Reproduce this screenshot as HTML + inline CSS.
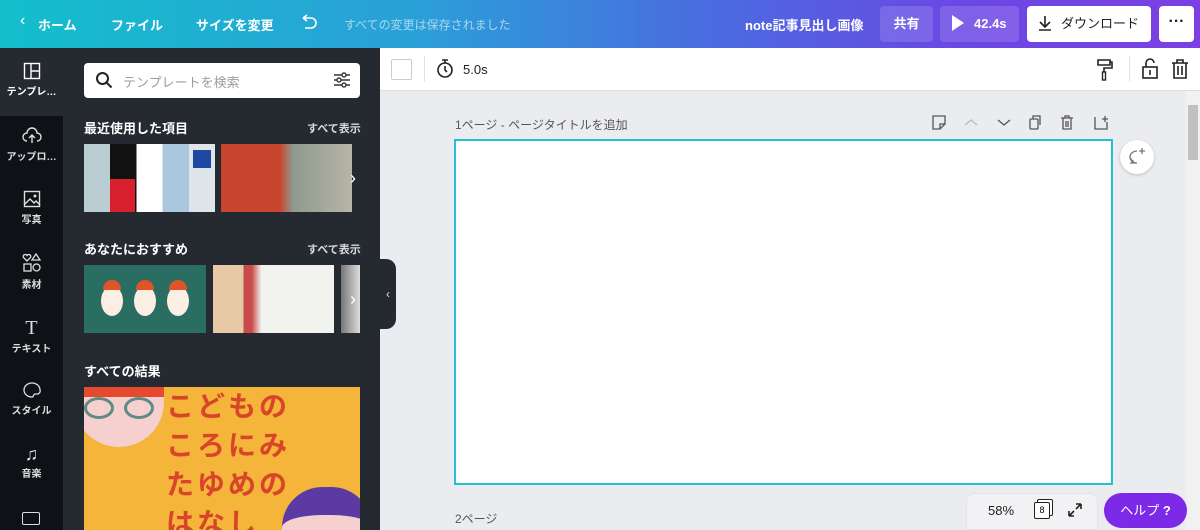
<!DOCTYPE html>
<html><head><meta charset="utf-8"><style>
*{margin:0;padding:0;box-sizing:border-box}
html,body{width:1200px;height:530px;overflow:hidden}
body{position:relative;font-family:"Liberation Sans","Noto Sans CJK JP",sans-serif;background:#ebecf0}
.abs{position:absolute}
.top{left:0;top:0;width:1200px;height:48px;background:linear-gradient(90deg,#13bfcb 0%,#2b9fd8 35%,#4b6ae0 60%,#6a48e4 80%,#7c3fe4 100%)}
.tt{color:#fff;font-size:13px;font-weight:bold;top:15px}
.rail{left:0;top:48px;width:63px;height:482px;background:#0e1217}
.ri{width:63px;text-align:center;color:#fff;font-size:10px;font-weight:bold}
.panel{left:63px;top:48px;width:317px;height:482px;background:#252a31}
.h{color:#fff;font-size:13px;font-weight:bold}
.all{color:#d6d8dc;font-size:11px;font-weight:bold}
.tool{left:380px;top:48px;width:820px;height:43px;background:#fff;border-bottom:1px solid #dcdde1}
</style></head><body>
<div class="abs top"></div>
<div class="abs tt" style="left:20px;font-weight:normal;font-size:16px;top:12px">‹</div>
<div class="abs tt" style="left:38px">ホーム</div>
<div class="abs tt" style="left:111px">ファイル</div>
<div class="abs tt" style="left:196px">サイズを変更</div>
<svg class="abs" style="left:299px;top:14px" width="20" height="18" viewBox="0 0 20 18"><path d="M4 4h8a5 5 0 0 1 0 10H6M4 4l4-3M4 4l4 3" fill="none" stroke="#fff" stroke-width="1.6"/></svg>
<div class="abs" style="left:344px;top:16px;color:#a8d8f0;font-size:12px">すべての変更は保存されました</div>
<div class="abs tt" style="left:745px">note記事見出し画像</div>
<div class="abs" style="left:880px;top:6px;width:53px;height:36px;background:rgba(255,255,255,.14);border-radius:4px;color:#fff;font-size:13px;font-weight:bold;text-align:center;line-height:36px">共有</div>
<div class="abs" style="left:940px;top:6px;width:79px;height:36px;background:rgba(255,255,255,.14);border-radius:4px;color:#fff;font-size:13px;font-weight:bold;line-height:36px;padding-left:12px"><span style="display:inline-block;width:0;height:0;border-left:12px solid #fff;border-top:8px solid transparent;border-bottom:8px solid transparent;vertical-align:-3px;margin-right:10px"></span>42.4s</div>
<div class="abs" style="left:1027px;top:6px;width:124px;height:36px;background:#fff;border-radius:4px;color:#222;font-size:13px;line-height:36px;padding-left:10px"><svg width="16" height="16" viewBox="0 0 16 16" style="vertical-align:-3px;margin-right:8px"><path d="M8 1v10M3 7l5 5 5-5M2 15h12" fill="none" stroke="#222" stroke-width="1.6"/></svg>ダウンロード</div>
<div class="abs" style="left:1159px;top:6px;width:35px;height:36px;background:#fff;border-radius:4px;color:#222;font-size:16px;font-weight:bold;text-align:center;line-height:32px">···</div>

<div class="abs rail"></div>
<div class="abs" style="left:0;top:48px;width:63px;height:68px;background:#252a31"></div>
<div class="abs ri" style="top:62px"><svg width="18" height="18"><rect x="1.5" y="1.5" width="15" height="15" fill="none" stroke="#fff" stroke-width="1.4"/><path d="M8 1.5v15M8 9h8.5" stroke="#fff" stroke-width="1.4"/></svg><br>テンプレ…</div>
<div class="abs ri" style="top:127px;color:#ddd"><svg width="20" height="18"><path d="M5 14a4 4 0 0 1 0-8 5 5 0 0 1 10 0 4 4 0 0 1 0 8M10 16V9M7 11l3-3 3 3" fill="none" stroke="#ddd" stroke-width="1.4"/></svg><br>アップロ…</div>
<div class="abs ri" style="top:190px;color:#ddd"><svg width="18" height="18"><rect x="1.5" y="1.5" width="15" height="15" fill="none" stroke="#ddd" stroke-width="1.4"/><path d="M2 14l5-5 4 4 2-2 4 4" fill="none" stroke="#ddd" stroke-width="1.4"/><circle cx="12" cy="6" r="1.5" fill="#ddd"/></svg><br>写真</div>
<div class="abs ri" style="top:253px;color:#ddd"><svg width="20" height="20"><path d="M5 8L1.5 4.5a2 2 0 0 1 3.5-2 2 2 0 0 1 3.5 2z M14 1l4 6h-8z" fill="none" stroke="#ddd" stroke-width="1.3"/><rect x="2" y="11" width="7" height="7" fill="none" stroke="#ddd" stroke-width="1.3"/><circle cx="14.5" cy="14.5" r="3.5" fill="none" stroke="#ddd" stroke-width="1.3"/></svg><br>素材</div>
<div class="abs ri" style="top:317px;color:#ddd"><span style="font-size:20px;font-family:'Liberation Serif';font-weight:normal">T</span><br>テキスト</div>
<div class="abs ri" style="top:381px;color:#ddd"><svg width="20" height="18"><path d="M10 2a8 7 0 1 0 0 14c2 0 1-3 3-3h2a3 3 0 0 0 3-4 8 7 0 0 0-8-7z" fill="none" stroke="#ddd" stroke-width="1.3"/></svg><br>スタイル</div>
<div class="abs ri" style="top:444px;color:#ddd"><span style="font-size:18px;font-weight:normal">♫</span><br>音楽</div>
<div class="abs" style="left:22px;top:512px;width:18px;height:13px;border:1.5px solid #ddd;border-radius:2px"></div>

<div class="abs panel"></div>
<div class="abs" style="left:84px;top:63px;width:276px;height:35px;background:#fff;border-radius:4px"></div>
<svg class="abs" style="left:95px;top:71px" width="18" height="18"><circle cx="7.5" cy="7.5" r="5.5" fill="none" stroke="#222" stroke-width="2"/><path d="M11.5 11.5l5 5" stroke="#222" stroke-width="2"/></svg>
<div class="abs" style="left:123px;top:72px;color:#9a9da3;font-size:13px">テンプレートを検索</div>
<svg class="abs" style="left:333px;top:71px" width="18" height="18"><path d="M1 4h16M1 9h16M1 14h16" stroke="#333" stroke-width="1.4"/><circle cx="11" cy="4" r="2" fill="#fff" stroke="#333" stroke-width="1.4"/><circle cx="6" cy="9" r="2" fill="#fff" stroke="#333" stroke-width="1.4"/><circle cx="11" cy="14" r="2" fill="#fff" stroke="#333" stroke-width="1.4"/></svg>

<div class="abs h" style="left:84px;top:118px">最近使用した項目</div>
<div class="abs all" style="left:307px;top:120px">すべて表示</div>
<div class="abs" style="left:84px;top:144px;width:131px;height:68px;background:linear-gradient(90deg,#b9cdd2 0 20%,#111 20% 40%,#fff 40% 60%,#a9c7dd 60% 80%,#dfe4e8 80%)"></div>
<div class="abs" style="left:110px;top:179px;width:25px;height:33px;background:#d8202e"></div>
<div class="abs" style="left:193px;top:150px;width:18px;height:18px;background:#1d4aa0"></div>
<div class="abs" style="left:221px;top:144px;width:131px;height:68px;background:linear-gradient(90deg,#c9452e 0 45%,#8e9a8e 55%,#b8b4a8 100%)"></div>
<div class="abs" style="left:350px;top:168px;color:#fff;font-size:18px">›</div>

<div class="abs h" style="left:84px;top:239px">あなたにおすすめ</div>
<div class="abs all" style="left:307px;top:241px">すべて表示</div>
<div class="abs" style="left:84px;top:265px;width:122px;height:68px;background:#2a6d63"></div>
<div class="abs" style="left:101px;top:286px;width:22px;height:30px;border-radius:50%;background:#fbeee2;box-shadow:33px 0 0 #fbeee2,66px 0 0 #fbeee2"></div>
<div class="abs" style="left:103px;top:280px;width:18px;height:10px;border-radius:9px 9px 0 0;background:#e0542a;box-shadow:33px 0 0 #e0542a,66px 0 0 #e0542a"></div>
<div class="abs" style="left:213px;top:265px;width:121px;height:68px;background:linear-gradient(90deg,#e8c9a6 0 25%,#c94a4a 25% 32%,#f2f2ef 40%)"></div>
<div class="abs" style="left:341px;top:265px;width:19px;height:68px;background:linear-gradient(90deg,#777,#ddd)"></div>
<div class="abs" style="left:350px;top:289px;color:#fff;font-size:18px">›</div>

<div class="abs h" style="left:84px;top:361px">すべての結果</div>
<div class="abs" style="left:84px;top:387px;width:276px;height:143px;background:#f4b53a;overflow:hidden">
<div class="abs" style="left:-10px;top:-30px;width:90px;height:90px;border-radius:50%;background:#f6cfcf"></div>
<div class="abs" style="left:-10px;top:-10px;width:90px;height:20px;background:#e64a2e"></div>
<div class="abs" style="left:0;top:10px;width:30px;height:22px;border:3px solid #5f8a85;border-radius:50%"></div>
<div class="abs" style="left:40px;top:10px;width:30px;height:22px;border:3px solid #5f8a85;border-radius:50%"></div>
<div class="abs" style="left:82px;top:0px;color:#d8452b;font-size:28px;font-weight:bold;line-height:39px;letter-spacing:3px">こどもの<br>ころにみ<br>たゆめの<br>はなし</div>
<div class="abs" style="left:198px;top:100px;width:90px;height:90px;border-radius:45%;background:#f6cfcf;border-top:28px solid #5b3ba3"></div>
</div>
<div class="abs" style="left:380px;top:259px;width:16px;height:70px;background:#252a31;border-radius:0 10px 10px 0;color:#ddd;font-size:12px;line-height:70px;text-align:center">‹</div>

<div class="abs tool"></div>
<div class="abs" style="left:391px;top:59px;width:21px;height:21px;border:1px solid #ccc;border-radius:2px"></div>
<div class="abs" style="left:424px;top:56px;width:1px;height:26px;background:#e2e2e2"></div>
<svg class="abs" style="left:435px;top:58px" width="20" height="22"><circle cx="10" cy="12" r="7" fill="none" stroke="#222" stroke-width="1.6"/><path d="M7 2h6M10 2v3M10 8v4l2 2" stroke="#222" stroke-width="1.6" fill="none"/></svg>
<div class="abs" style="left:463px;top:62px;font-size:13px;color:#222">5.0s</div>
<svg class="abs" style="left:1095px;top:58px" width="20" height="24"><path d="M3 2h12v5H3zM15 4h2v6H9v4" fill="none" stroke="#222" stroke-width="1.6"/><rect x="7.5" y="14" width="3" height="8" fill="none" stroke="#222" stroke-width="1.4"/></svg>
<div class="abs" style="left:1129px;top:56px;width:1px;height:26px;background:#e2e2e2"></div>
<svg class="abs" style="left:1140px;top:58px" width="20" height="22"><rect x="3" y="9" width="14" height="11" fill="none" stroke="#222" stroke-width="1.6"/><path d="M6 9V5a4 4 0 0 1 8 0M10 12v5" fill="none" stroke="#222" stroke-width="1.6"/></svg>
<svg class="abs" style="left:1170px;top:58px" width="20" height="22"><path d="M2 5h16M7 5V2h6v3M4 5v15h12V5M8 8v9M12 8v9" fill="none" stroke="#222" stroke-width="1.6"/></svg>

<div class="abs" style="left:455px;top:116px;font-size:12px;color:#555">1ページ - ページタイトルを追加</div>
<svg class="abs" style="left:930px;top:114px" width="180" height="18">
<g fill="none" stroke="#555" stroke-width="1.3">
<path d="M3 2h12v8l-5 5H3z M10 15v-5h5"/>
<path d="M35 11l6-5 6 5" stroke="#bbb"/>
<path d="M68 6l6 5 6-5"/>
<rect x="100" y="5" width="8" height="10" rx="1"/><path d="M103 5V2h7v9"/>
<path d="M131 4h12M135 4V2h4v2M133 4v11h8V4M136 7v6M138 7v6"/>
<path d="M165 3v12h12V8M172 5h6M175 2v6"/>
</g></svg>
<div class="abs" style="left:454px;top:139px;width:659px;height:346px;background:#fff;border:2px solid #24c3c9"></div>
<div class="abs" style="left:1120px;top:140px;width:34px;height:34px;border-radius:50%;background:#fff;box-shadow:0 1px 3px rgba(0,0,0,.2)"></div>
<svg class="abs" style="left:1127px;top:147px" width="20" height="20"><path d="M10 4a7 6 0 1 0 0 12h-6l2-2a6 6 0 0 1-3-4" fill="none" stroke="#777" stroke-width="1.3"/><path d="M15 1v6M12 4h6" stroke="#777" stroke-width="1.3"/></svg>
<div class="abs" style="left:455px;top:510px;font-size:12px;color:#555">2ページ</div>
<div class="abs" style="left:1186px;top:91px;width:14px;height:439px;background:#f1f1f1"></div>
<div class="abs" style="left:1188px;top:105px;width:10px;height:55px;background:#c1c1c1"></div>
<div class="abs" style="left:966px;top:493px;width:132px;height:37px;background:#f2f2f4;border-radius:8px 8px 0 0;border:1px solid #e4e4e8"></div>
<div class="abs" style="left:988px;top:503px;font-size:13px;color:#222">58%</div>
<div class="abs" style="left:1034px;top:502px;width:16px;height:17px;border:1.5px solid #222;border-radius:2px;font-size:9px;text-align:center;line-height:14px;background:#fff;box-shadow:3px -3px 0 -1px #fff,3px -3px 0 0 #222">8</div>
<svg class="abs" style="left:1066px;top:501px" width="18" height="18"><path d="M3 15l5-5M3 15v-5M3 15h5M15 3l-5 5M15 3v5M15 3h-5" fill="none" stroke="#222" stroke-width="1.6"/></svg>
<div class="abs" style="left:1104px;top:493px;width:83px;height:35px;border-radius:18px;background:#7d2ae8;color:#fff;font-size:13px;line-height:35px;text-align:center">ヘルプ <b>?</b></div>
</body></html>
